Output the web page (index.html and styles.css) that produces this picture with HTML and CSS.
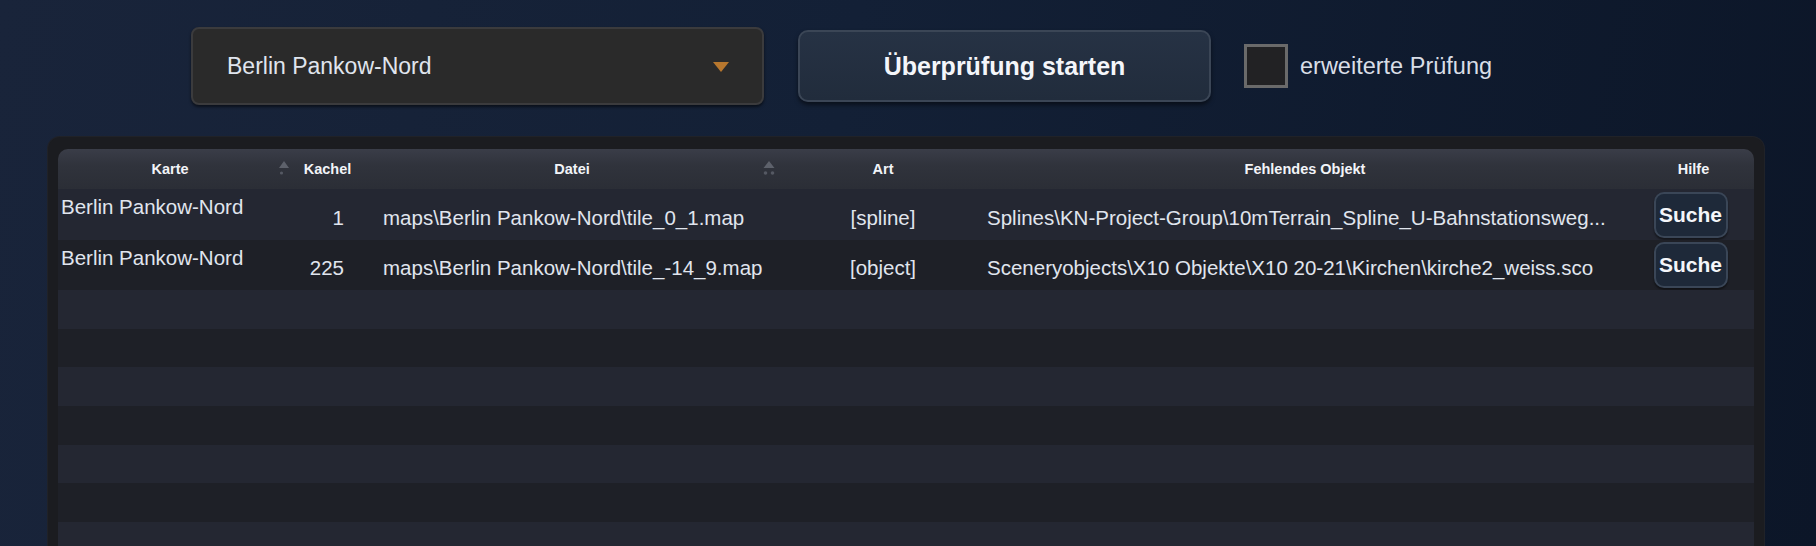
FILE: index.html
```html
<!DOCTYPE html>
<html lang="de">
<head>
<meta charset="utf-8">
<title>Überprüfung</title>
<link rel="stylesheet" href="styles.css">
</head>
<body>
<div class="page">
  <div class="toolbar">
    <div class="select">
      <span class="select-text">Berlin Pankow-Nord</span>
      <span class="select-arrow"></span>
    </div>
    <button class="start-btn">Überprüfung starten</button>
    <label class="check">
      <span class="check-box"></span>
      <span class="check-label">erweiterte Prüfung</span>
    </label>
  </div>

  <div class="panel">
    <table class="grid">
      <colgroup>
        <col class="c-karte">
        <col class="c-kachel">
        <col class="c-datei">
        <col class="c-art">
        <col class="c-obj">
        <col class="c-hilfe">
      </colgroup>
      <thead>
        <tr>
          <th class="sortable"><span>Karte</span>
            <svg class="sort sort-karte" width="12" height="16" viewBox="0 0 12 16"><path d="M6 1 L11 8 L1 8 Z" fill="#5d616b"/><circle cx="3.5" cy="13" r="1.6" fill="#555963"/></svg>
          </th>
          <th>Kachel</th>
          <th class="sortable"><span>Datei</span>
            <svg class="sort sort-datei" width="14" height="16" viewBox="0 0 14 16"><path d="M7 1 L12.5 8 L1.5 8 Z" fill="#5d616b"/><circle cx="3.5" cy="13" r="1.8" fill="#555963"/><circle cx="10.5" cy="13" r="1.8" fill="#555963"/></svg>
          </th>
          <th>Art</th>
          <th>Fehlendes Objekt</th>
          <th>Hilfe</th>
        </tr>
      </thead>
      <tbody>
        <tr class="data">
          <td class="karte">Berlin Pankow-Nord</td>
          <td class="num">1</td>
          <td class="path">maps\Berlin Pankow-Nord\tile_0_1.map</td>
          <td class="art">[spline]</td>
          <td class="obj">Splines\KN-Project-Group\10mTerrain_Spline_U-Bahnstationsweg...</td>
          <td class="hilfe"><button class="search-btn">Suche</button></td>
        </tr>
        <tr class="data">
          <td class="karte">Berlin Pankow-Nord</td>
          <td class="num">225</td>
          <td class="path">maps\Berlin Pankow-Nord\tile_-14_9.map</td>
          <td class="art">[object]</td>
          <td class="obj">Sceneryobjects\X10 Objekte\X10 20-21\Kirchen\kirche2_weiss.sco</td>
          <td class="hilfe"><button class="search-btn">Suche</button></td>
        </tr>
        <tr class="empty"><td colspan="6"></td></tr>
        <tr class="empty"><td colspan="6"></td></tr>
        <tr class="empty"><td colspan="6"></td></tr>
        <tr class="empty"><td colspan="6"></td></tr>
        <tr class="empty"><td colspan="6"></td></tr>
        <tr class="empty"><td colspan="6"></td></tr>
        <tr class="empty"><td colspan="6"></td></tr>
      </tbody>
    </table>
  </div>
</div>
</body>
</html>
```

FILE: styles.css
```css
html, body {
  margin: 0;
  padding: 0;
  height: 100%;
  overflow: hidden;
}

body {
  background: linear-gradient(100deg, #19243a 0%, #132036 45%, #0c1628 100%);
  font-family: "Liberation Sans", Arial, sans-serif;
  color: #e1e6ee;
}

.page {
  padding-top: 27px;
}

.toolbar {
  display: flex;
  align-items: center;
  margin-left: 191px;
  height: 78px;
}

.select {
  box-sizing: border-box;
  width: 573px;
  height: 78px;
  background: #2a2a2a;
  border: 2px solid #3b3b3d;
  border-radius: 8px;
  box-shadow: 0 2px 3px rgba(0, 0, 0, 0.55);
  display: flex;
  align-items: center;
  justify-content: space-between;
  padding: 0 33px 0 34px;
}

.select-text {
  font-size: 23px;
  color: #e0e5ee;
}

.select-arrow {
  width: 0;
  height: 0;
  border-left: 8px solid transparent;
  border-right: 8px solid transparent;
  border-top: 10px solid #b7772e;
  margin-top: 2px;
}

.start-btn {
  box-sizing: border-box;
  margin-left: 34px;
  width: 413px;
  height: 72px;
  background: linear-gradient(180deg, #263244 0%, #212c3c 100%);
  border: 2px solid #3b4656;
  border-radius: 10px;
  box-shadow: 0 3px 4px rgba(0, 0, 0, 0.5);
  color: #f4f6fa;
  font-family: "Liberation Sans", Arial, sans-serif;
  font-weight: bold;
  font-size: 25px;
  padding: 0;
  cursor: pointer;
}

.check {
  display: flex;
  align-items: center;
  margin-left: 33px;
}

.check-box {
  box-sizing: border-box;
  width: 44px;
  height: 44px;
  border: 3px solid #6a6a6a;
  background: #222224;
}

.check-label {
  margin-left: 12px;
  font-size: 23.5px;
  color: #d9dee7;
}

.panel {
  box-sizing: border-box;
  margin-top: 32px;
  margin-left: 48px;
  width: 1716px;
  height: 409px;
  overflow: hidden;
  background: #1b1c20;
  border-radius: 12px 12px 0 0;
  padding: 12px 10px 0 10px;
  box-shadow: 0 0 0 1px #202228;
}

.grid {
  width: 100%;
  table-layout: fixed;
  border-collapse: collapse;
  border-spacing: 0;
}

.c-karte { width: 242px; }
.c-kachel { width: 55px; }
.c-datei { width: 434px; }
.c-art { width: 188px; }
.c-obj { width: 656px; }
.c-hilfe { width: 121px; }

.grid thead th {
  height: 40px;
  padding: 0;
  background: linear-gradient(180deg, #3a3d48 0%, #30333c 40%, #2b2e36 100%);
  color: #f2f4f8;
  font-size: 14.5px;
  font-weight: bold;
  text-align: center;
  position: relative;
}

.grid thead th:first-child { border-top-left-radius: 10px; }
.grid thead th:last-child { border-top-right-radius: 10px; }

.grid thead th.sortable span {
  display: inline-block;
}

.grid thead th:first-child span {
  margin-right: 18px;
}

.sort {
  position: absolute;
  top: 11px;
}

.sort-karte {
  right: 10px;
}

.sort-datei {
  right: 13px;
}

.grid tbody tr:nth-child(odd) { background: #242732; }
.grid tbody tr:nth-child(even) { background: #1e2027; }

.grid tbody td {
  padding: 0;
  font-size: 20.5px;
  color: #e0e5ee;
  white-space: nowrap;
  overflow: hidden;
  text-overflow: ellipsis;
}

.grid tbody tr.data:first-child { height: 51px; }
.grid tbody tr.data:nth-child(2) { height: 50px; }
.grid tbody tr.empty { height: 38.7px; }

.grid td.karte {
  vertical-align: top;
  padding: 6px 0 0 3px;
}

.grid td.num {
  text-align: right;
  padding-right: 11px;
  vertical-align: middle;
  padding-top: 6px;
}

.grid td.path {
  padding-left: 28px;
  vertical-align: middle;
  padding-top: 6px;
}

.grid td.art {
  text-align: center;
  vertical-align: middle;
  padding-top: 6px;
}

.grid td.obj {
  padding-left: 10px;
  padding-right: 10px;
  vertical-align: middle;
  padding-top: 6px;
}

.grid td.hilfe {
  text-align: center;
  vertical-align: middle;
  padding-right: 6px;
}

.search-btn {
  box-sizing: border-box;
  width: 74px;
  height: 46px;
  background: #1e2939;
  border: 2px solid #3a4657;
  border-radius: 10px;
  box-shadow: 0 2px 2px rgba(0, 0, 0, 0.45);
  color: #f4f6fa;
  font-family: "Liberation Sans", Arial, sans-serif;
  font-weight: bold;
  font-size: 21px;
  padding: 0;
  vertical-align: middle;
}
```
